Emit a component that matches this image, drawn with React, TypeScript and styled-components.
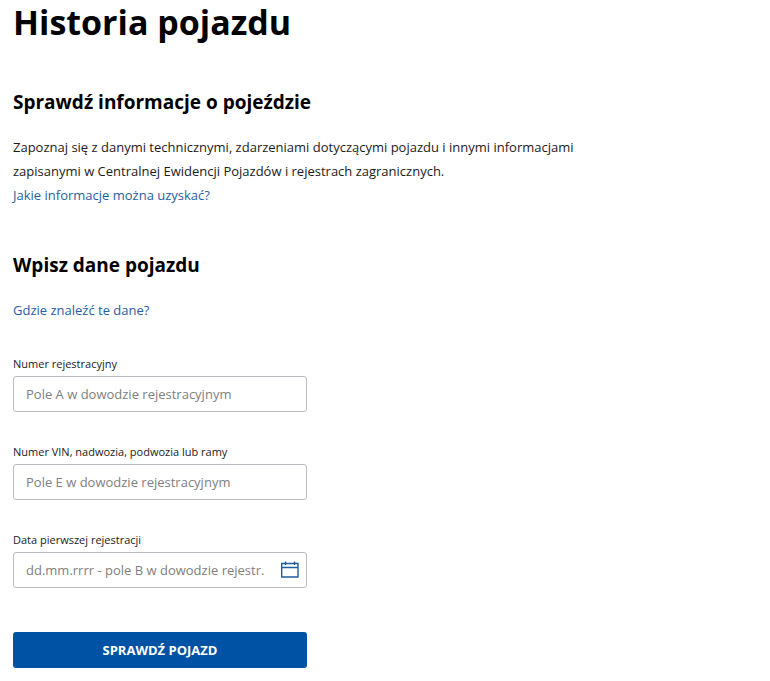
import React from "react";
import styled, { createGlobalStyle } from "styled-components";

const Global = createGlobalStyle`
  *, *::before, *::after { box-sizing: border-box; }
  body {
    margin: 0;
    background: #fff;
    color: #1b1b1b;
    font-family: "Open Sans", "Noto Sans", sans-serif;
    font-size: 13px;
  }
`;

const Page = styled.main`
  display: flex;
  flex-direction: column;
  gap: 45px;
  padding: 0 13px 12px;
`;

const Title = styled.h1`
  margin: 0;
  font-size: 34px;
  line-height: 44px;
  font-weight: 700;
  color: #000;
`;

const Heading = styled.h2`
  margin: 0 0 20px;
  font-size: 19px;
  line-height: 26px;
  font-weight: 700;
  color: #000;
`;

const Intro = styled.p`
  margin: 0;
  max-width: 580px;
  line-height: 24px;
`;

const TextLink = styled.a`
  display: table;
  line-height: 24px;
  color: #1f5f9f;
  text-decoration: none;
`;

const Form = styled.form`
  display: flex;
  flex-direction: column;
  gap: 31px;
  max-width: 294px;
  margin-top: 33px;
`;

const Field = styled.div`
  display: flex;
  flex-direction: column;
  gap: 3px;
`;

const Label = styled.label`
  font-size: 11px;
  line-height: 18px;
`;

const InputBox = styled.div`
  display: flex;
  align-items: center;
  height: 36px;
  border: 1px solid #b9bbc0;
  border-radius: 3px;
  background: #fff;

  &:focus-within { border-color: #0052a5; }
`;

const Input = styled.input`
  flex: 1;
  min-width: 0;
  height: 100%;
  padding: 0 12px;
  border: 0;
  outline: 0;
  background: transparent;
  font: inherit;
  color: #1b1b1b;
  &::placeholder { color: #808080; opacity: 1; }
`;

const IconButton = styled.button`
  display: flex;
  padding: 0;
  margin-right: 7px;
  border: 0;
  background: none;
  color: #1f5f9f;
  cursor: pointer;
`;

const Submit = styled.button`
  height: 36px;
  margin-top: 13px;
  border: 0;
  border-radius: 3px;
  background: #0052a5;
  color: #fff;
  font: inherit;
  font-weight: 700;
  cursor: pointer;
`;

const CalendarIcon = () => (
  <svg width="18" height="18" viewBox="0 0 18 18" fill="none" stroke="currentColor" strokeWidth="1.4" aria-hidden="true">
    <path d="M.7 2.500h16.300v13.500H.7zM.7 6.500h16.300M4.500 .5v3.500M13.500 .5v3.500" />
  </svg>
);

type TextFieldProps = {
  id: string;
  label: string;
  placeholder: string;
  children?: React.ReactNode;
};

const TextField = ({ id, label, placeholder, children }: TextFieldProps) => (
  <Field>
    <Label htmlFor={id}>{label}</Label>
    <InputBox>
      <Input id={id} type="text" placeholder={placeholder} />
      {children}
    </InputBox>
  </Field>
);

export default function App() {
  return (
    <>
      <Global />
      <Page>
        <Title>Historia pojazdu</Title>
        <section>
          <Heading>Sprawdź informacje o pojeździe</Heading>
          <Intro>
            Zapoznaj się z danymi technicznymi, zdarzeniami dotyczącymi pojazdu i innymi informacjami
            zapisanymi w Centralnej Ewidencji Pojazdów i rejestrach zagranicznych.
          </Intro>
          <TextLink href="#informacje">Jakie informacje można uzyskać?</TextLink>
        </section>
        <section>
          <Heading>Wpisz dane pojazdu</Heading>
          <TextLink href="#dane">Gdzie znaleźć te dane?</TextLink>
          <Form onSubmit={(e) => e.preventDefault()}>
            <TextField id="plate" label="Numer rejestracyjny" placeholder="Pole A w dowodzie rejestracyjnym" />
            <TextField id="vin" label="Numer VIN, nadwozia, podwozia lub ramy" placeholder="Pole E w dowodzie rejestracyjnym" />
            <TextField id="date" label="Data pierwszej rejestracji" placeholder="dd.mm.rrrr - pole B w dowodzie rejestr.">
              <IconButton type="button" aria-label="Wybierz datę">
                <CalendarIcon />
              </IconButton>
            </TextField>
            <Submit type="submit">SPRAWDŹ POJAZD</Submit>
          </Form>
        </section>
      </Page>
    </>
  );
}
